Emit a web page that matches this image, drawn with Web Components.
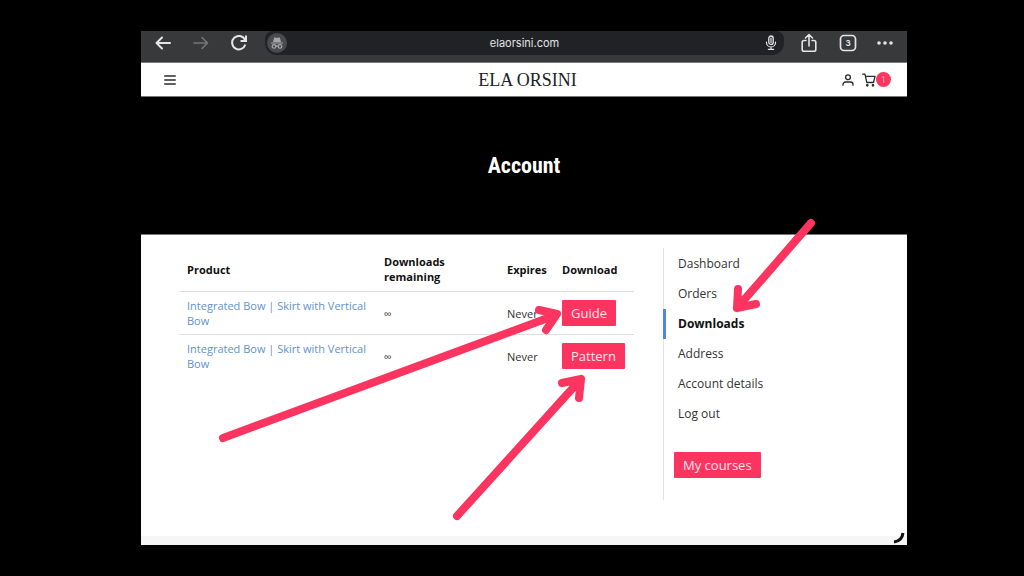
<!DOCTYPE html>
<html lang="en">
<head>
<meta charset="utf-8">
<meta name="viewport" content="width=device-width, initial-scale=1">
<title>Account – Ela Orsini</title>
<style>
  html, body { margin: 0; background: #000; }
  body { font-family: "Open Sans", "Noto Sans", sans-serif; color: #333; }
</style>
</head>
<body>
<tablet-stage>
  <browser-bar address="elaorsini.com" tabs="3"></browser-bar>
  <shop-header cart="1">ELA ORSINI</shop-header>
  <page-hero>Account</page-hero>
  <account-layout>
    <download-table></download-table>
    <account-nav slot="side">
      <pink-button href="#courses">My courses</pink-button>
    </account-nav>
  </account-layout>
  <callout-arrows slot="overlay"></callout-arrows>
</tablet-stage>

<script>
const define = (name, html, setup) => {
  const template = document.createElement('template');
  template.innerHTML = html;
  customElements.define(name, class extends HTMLElement {
    constructor() {
      super();
      this.attachShadow({ mode: 'open' }).append(template.content.cloneNode(true));
    }
    connectedCallback() { if (setup) setup(this, this.shadowRoot); }
  });
};

define('tablet-stage', `
  <style>
    :host { display: block; padding: 31px 117px 31px 141px; }
    .screen { position: relative; background: #fff; }
  </style>
  <div class="screen"><slot></slot><slot name="overlay"></slot></div>`);

define('browser-bar', `
  <style>
    :host { display: flex; align-items: flex-start; height: 32px; background: #37393b;
      border-bottom: 1px solid #77797b; box-sizing: border-box; color: #e4e5e6;
      font: 11px/24px Inter, sans-serif; padding: 0 14px; }
    .group { display: flex; gap: 22px; }
    .group.end { padding-left: 17px; }
    button { all: unset; display: grid; place-items: center; width: 16px; height: 24px; }
    svg { display: block; fill: none; stroke: currentColor; stroke-width: 2; stroke-linecap: round; stroke-linejoin: round; }
    .off { color: #747678; }
    .pill { flex: 1; display: grid; grid-template-columns: 1fr auto 1fr; align-items: center; height: 24px;
      margin-left: 18px; background: #202226; border-radius: 8px 8px 12px 12px; }
    .who { display: grid; place-items: center; width: 20px; height: 20px; margin-left: 2px; border-radius: 50%;
      background: #484b4e; color: #a5a8aa; }
    .mic { justify-self: end; margin-right: 5px; }
  </style>
  <div class="group">
    <button aria-label="Back"><svg width="16" height="16"><path d="M15 8H1.5M7 2.5L1.5 8L7 13.5"/></svg></button>
    <button class="off" aria-label="Forward"><svg width="16" height="16"><path stroke-width="1.6" d="M1 8H14.5M9 2.5L14.5 8L9 13.5"/></svg></button>
    <button aria-label="Reload"><svg width="16" height="16"><path stroke-linecap="butt" stroke-linejoin="miter" d="M14.3 9.5A6.7 6.7 0 1 1 13.8 4.6M15 .5V6H9.5"/></svg></button>
  </div>
  <div class="pill">
    <span class="who"><svg width="14" height="14" stroke-width="1"><path fill="currentColor" stroke="none" d="M4.2 1.5h1.3L7 2l1.5-.5h1.3L11 6H3z"/><path stroke-width="1.2" d="M1.5 7H12.5M5.8 10.2Q7 9.4 8.2 10.2"/><circle cx="4" cy="10.4" r="1.8" stroke-width="1.2"/><circle cx="10" cy="10.4" r="1.8" stroke-width="1.2"/></svg></span>
    <span id="address"></span>
    <button class="mic" aria-label="Voice search"><svg width="12" height="16" stroke-width="1"><rect x="3.8" y="1" width="4.4" height="8.4" rx="2.2" stroke-width="1.3"/><path stroke-width="1.2" d="M1.5 7V7.5A4.5 4.5 0 0 0 10.500 7.500V7M6 12V14M3.300 14.300H8.700M6 3V7.500"/></svg></button>
  </div>
  <div class="group end">
    <button aria-label="Share"><svg width="16" height="20"><path stroke-width="1.6" d="M5 7.500H3A1.800 1.800 0 0 0 1.200 9.300V16.500A1.800 1.800 0 0 0 3 18.300H13A1.800 1.800 0 0 0 14.800 16.500V9.300A1.800 1.800 0 0 0 13 7.500H11M8 13V1.800M4.500 5L8 1.500L11.500 5"/></svg></button>
    <button aria-label="Tabs"><svg width="18" height="18"><rect x="1.500" y="1.500" width="15" height="15" rx="3.500" stroke-width="1.700"/><text id="tabs" x="9" y="12" text-anchor="middle" font-size="8" font-weight="700" fill="currentColor" stroke="none"></text></svg></button>
    <button aria-label="More"><svg width="16" height="16"><g fill="currentColor" stroke="none"><circle cx="2" cy="8" r="1.800"/><circle cx="8" cy="8" r="1.800"/><circle cx="14" cy="8" r="1.800"/></g></svg></button>
  </div>`,
  (host, root) => {
    root.getElementById('address').textContent = host.getAttribute('address');
    root.getElementById('tabs').textContent = host.getAttribute('tabs');
  });

define('shop-header', `
  <style>
    :host { display: grid; grid-template-columns: 1fr auto 1fr; align-items: center; height: 34px; box-sizing: border-box;
      background: #fff; border-bottom: 1px solid #777; padding: 0 16px 0 23px; color: #2b2b2b; }
    button { all: unset; display: block; }
    svg { display: block; fill: none; stroke: currentColor; stroke-width: 1.300; stroke-linecap: round; stroke-linejoin: round; }
    .brand { font: 18px/24px "Liberation Serif", serif; color: #222; }
    .tools { display: flex; justify-content: flex-end; align-items: center; }
    .cart { display: flex; align-items: center; margin-left: 7px; }
    .badge { width: 15px; height: 15px; border-radius: 50%; background: #fb3560; color: #ffb3c3;
      font: 9px/15px "Open Sans", sans-serif; text-align: center; }
  </style>
  <button aria-label="Menu"><svg width="12" height="12"><path d="M.700 2H11.300M.700 6H11.300M.700 10H11.300"/></svg></button>
  <span class="brand"><slot></slot></span>
  <div class="tools">
    <button aria-label="My account"><svg width="14" height="14"><circle cx="7" cy="4.300" r="2.400"/><path d="M2 12.300V11.500A2.500 2.500 0 0 1 4.500 9H9.500A2.500 2.500 0 0 1 12 11.500V12.300"/></svg></button>
    <button class="cart" aria-label="Cart"><svg width="14" height="14"><path d="M.700 1.200H3L4.800 9.500H11.500L13 3.300H3.500"/><circle cx="5.300" cy="12.300" r=".700" fill="currentColor"/><circle cx="11" cy="12.300" r=".700" fill="currentColor"/></svg><span class="badge"></span></button>
  </div>`,
  (host, root) => { root.querySelector('.badge').textContent = host.getAttribute('cart'); });

define('page-hero', `
  <style>
    :host { display: block; background: #000; padding: 55px 0 54px; border-bottom: 1px solid #777; }
    h1 { margin: 0; text-align: center; color: #fff; font: 700 22px/28px "Roboto Condensed", "Liberation Sans Narrow", Roboto, sans-serif; }
  </style>
  <h1><slot></slot></h1>`);

define('account-layout', `
  <style>
    :host { display: block; background: #fff; border-bottom: 9px solid #f6f6f6; }
    .row { display: flex; align-items: stretch; gap: 29px; padding: 13px 0 36px 38px; }
    main { flex: 1; min-width: 0; }
    aside { width: 244px; display: flex; }
  </style>
  <div class="row"><main><slot></slot></main><aside><slot name="side"></slot></aside></div>`);

define('pink-button', `
  <style>
    :host { display: inline-block; vertical-align: middle; }
    a { display: block; padding: 0 9px; background: #fb3560; color: #ffe3e9; border-radius: 1px; text-decoration: none;
      font-size: 13px; line-height: 26px; white-space: nowrap; }
  </style>
  <a><slot></slot></a>`,
  (host, root) => { root.querySelector('a').href = host.getAttribute('href'); });

define('download-table', `
  <style>
    :host { display: block; font-size: 11px; line-height: 15px; }
    table { width: 100%; table-layout: fixed; border-collapse: separate; border-spacing: 0; }
    th, td { box-sizing: border-box; padding: 6px 8px 7px; text-align: left; vertical-align: middle; }
    th { color: #111; font-weight: 700; }
    td { border-top: 1px solid #dedede; padding-bottom: 6px; }
    .remaining { width: 123px; } .expires { width: 55px; } .download { width: 80px; }
    td:last-child, th:last-child { padding-right: 0; }
    th.expires { padding-right: 0; }
    td a { color: #5f92cc; text-decoration: none; }
    pink-button { display: block; width: fit-content; }
  </style>
  <table>
    <thead><tr><th>Product</th><th class="remaining">Downloads remaining</th><th class="expires">Expires</th><th class="download">Download</th></tr></thead>
    <tbody>
      <tr><td><a href="#product">Integrated Bow | Skirt with Vertical Bow</a></td><td>∞</td><td>Never</td><td><pink-button href="#guide">Guide</pink-button></td></tr>
      <tr><td><a href="#product">Integrated Bow | Skirt with Vertical Bow</a></td><td>∞</td><td>Never</td><td><pink-button href="#pattern">Pattern</pink-button></td></tr>
    </tbody>
  </table>`);

define('account-nav', `
  <style>
    :host { display: block; flex: 1; border-left: 1px solid #e2e2e2; font-size: 12px; padding-bottom: 22px; }
    ul { list-style: none; margin: 0 0 23px; padding: 1px 0 0; }
    a { display: block; margin-left: -1px; border-left: 3px solid transparent; padding-left: 12px; line-height: 30px;
      color: #333; text-decoration: none; }
    a[aria-current] { border-color: #4f86ea; color: #111; font-weight: 700; }
    .more { padding-left: 10px; }
  </style>
  <nav><ul>
    <li><a href="#dashboard">Dashboard</a></li>
    <li><a href="#orders">Orders</a></li>
    <li><a href="#downloads" aria-current="page">Downloads</a></li>
    <li><a href="#address">Address</a></li>
    <li><a href="#details">Account details</a></li>
    <li><a href="#logout">Log out</a></li>
  </ul></nav>
  <div class="more"><slot></slot></div>`);

define('callout-arrows', `
  <style>
    :host { position: absolute; inset: 0; pointer-events: none; }
    svg { display: block; width: 100%; height: 100%; overflow: visible; fill: none; stroke: #fb3560; stroke-width: 8;
      stroke-linecap: round; stroke-linejoin: round; }
  </style>
  <svg viewBox="141 31 766 514" aria-hidden="true">
    <path d="M223 438L556 315M539 310L557 314L546 330"/>
    <path d="M457 516L581 379M562 383L581 379L579 398"/>
    <path d="M811 223L737 308M738 289L737 308L756 304"/>
    <path d="M894 542Q902 541 903 533" stroke="#111" stroke-width="3" stroke-linecap="butt"/>
  </svg>`);
</script>
</body>
</html>
